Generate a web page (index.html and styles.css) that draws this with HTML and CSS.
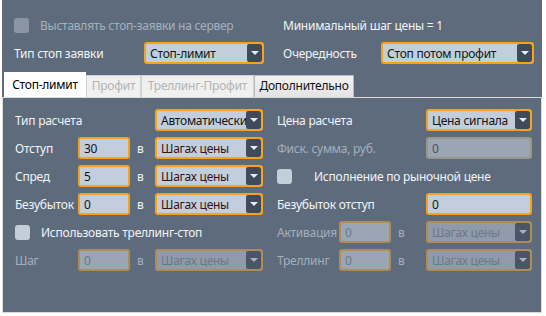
FILE: index.html
```html
<!DOCTYPE html>
<html lang="ru">
<head>
<meta charset="UTF-8">
<title>Стоп-заявки</title>
<link rel="stylesheet" href="styles.css">
</head>
<body>
<div class="window">

  <div class="top">
    <div class="top-row first">
      <label class="check-item disabled wide">
        <span class="box"></span>
        <span>Выставлять стоп-заявки на сервер</span>
      </label>
      <span class="lbl">Минимальный шаг цены = 1</span>
    </div>
    <div class="top-row second">
      <span class="lbl type-lbl">Тип стоп заявки</span>
      <div class="combo type-combo"><span class="val">Стоп-лимит</span><span class="arrow"></span></div>
      <span class="lbl order-lbl">Очередность</span>
      <div class="combo order-combo"><span class="val">Стоп потом профит</span><span class="arrow"></span></div>
    </div>
  </div>

  <div class="tabs">
    <div class="tab active t1">Стоп-лимит</div>
    <div class="tab off t2">Профит</div>
    <div class="tab off t3">Треллинг-Профит</div>
    <div class="tab extra t4">Дополнительно</div>
  </div>

  <div class="panel">
    <!-- левая колонка -->
    <div class="form left">
      <span class="lbl span2">Тип расчета</span>
      <span></span>
      <div class="combo"><span class="val">Автоматически</span><span class="arrow"></span></div>

      <span class="lbl">Отступ</span>
      <div class="input">30</div>
      <span class="lbl in">в</span>
      <div class="combo"><span class="val brown">Шагах цены</span><span class="arrow"></span></div>

      <span class="lbl">Спред</span>
      <div class="input">5</div>
      <span class="lbl in">в</span>
      <div class="combo"><span class="val brown">Шагах цены</span><span class="arrow"></span></div>

      <span class="lbl">Безубыток</span>
      <div class="input">0</div>
      <span class="lbl in">в</span>
      <div class="combo"><span class="val brown">Шагах цены</span><span class="arrow"></span></div>

      <label class="check-item span4">
        <span class="box"></span>
        <span>Использовать треллинг-стоп</span>
      </label>

      <span class="lbl dim">Шаг</span>
      <div class="input disabled">0</div>
      <span class="lbl in dim">в</span>
      <div class="combo disabled"><span class="val">Шагах цены</span><span class="arrow"></span></div>
    </div>

    <!-- правая колонка -->
    <div class="form right">
      <span class="lbl span3">Цена расчета</span>
      <div class="combo"><span class="val">Цена сигнала</span><span class="arrow"></span></div>

      <span class="lbl dim span3">Фиск. сумма, руб.</span>
      <div class="input grey">0</div>

      <label class="check-item span4 market">
        <span class="box"></span>
        <span class="market-text">Исполнение по рыночной цене</span>
      </label>

      <span class="lbl span3">Безубыток отступ</span>
      <div class="input">0</div>

      <span class="lbl dim">Активация</span>
      <div class="input disabled">0</div>
      <span class="lbl in dim">в</span>
      <div class="combo disabled"><span class="val">Шагах цены</span><span class="arrow"></span></div>

      <span class="lbl dim">Треллинг</span>
      <div class="input disabled">0</div>
      <span class="lbl in dim">в</span>
      <div class="combo disabled"><span class="val">Шагах цены</span><span class="arrow"></span></div>
    </div>
  </div>

</div>
</body>
</html>
```

FILE: styles.css
```css
body {
    margin: 0;
    background: #ffffff;
    font-family: "Noto Sans", "Open Sans", sans-serif;
    font-size: 12px;
    letter-spacing: -0.25px;
    color: #f2f4f6;
}

.window {
    margin-left: 2px;
    width: 540px;
    height: 313px;
    background: #5d6b7c;
    display: flex;
    flex-direction: column;
}

/* верхняя часть */
.top {
    padding: 15px 0 0 12px;
}
.top-row {
    display: flex;
    align-items: center;
}
.top-row.first {
    height: 20px;
}
.top-row.second {
    margin-top: 7px;
    height: 22px;
}
.wide {
    width: 269px;
}
.type-lbl {
    width: 130px;
}
.type-combo {
    width: 120px;
}
.order-lbl {
    margin-left: 19px;
    width: 98px;
}
.order-combo {
    width: 153px;
}

.lbl {
    white-space: nowrap;
}
.lbl.dim {
    color: #a4afbc;
}
.lbl.in {
    padding-left: 7px;
}

/* чекбоксы */
.check-item {
    display: flex;
    align-items: center;
    gap: 11px;
}
.box {
    width: 15px;
    height: 15px;
    border-radius: 3px;
    background: #c3cedb;
}
.check-item.disabled {
    color: #a7b1bd;
}
.check-item.disabled .box {
    background: #8a96a5;
}
.market .market-text {
    padding-left: 11px;
}

/* комбобоксы и поля */
.combo,
.input {
    box-sizing: border-box;
    height: 22px;
    border: 2px solid #f7a21b;
    border-radius: 3px;
    background: #c2cedb;
    color: #141414;
    display: flex;
    align-items: center;
    overflow: hidden;
}
.combo .val {
    flex: 1;
    padding-left: 4px;
    white-space: nowrap;
    overflow: hidden;
}
.combo .val.brown {
    color: #3a1414;
}
.combo .arrow {
    flex: none;
    width: 15px;
    height: 18px;
    background: #3f4b5d;
    border-radius: 2px;
    position: relative;
}
.combo .arrow::after {
    content: "";
    position: absolute;
    left: 4px;
    top: 7px;
    border-left: 4px solid transparent;
    border-right: 4px solid transparent;
    border-top: 4px solid #e8ecf0;
}
.input {
    padding-left: 4px;
}
.combo.disabled,
.input.disabled {
    border-color: #b08c55;
    background: #8f9baa;
    color: #6c7888;
}
.input.disabled {
    background: #9aa6b4;
}
.combo.disabled .arrow {
    background: #4a5668;
}
.combo.disabled .arrow::after {
    border-top-color: #a8b2be;
}
.input.grey {
    border-color: #98978c;
    background: #9aa6b3;
    color: #4a5260;
}

/* вкладки */
.tabs {
    margin-top: 8px;
    display: flex;
    align-items: flex-end;
    padding-left: 2px;
    height: 25px;
}
.tab {
    box-sizing: border-box;
    height: 22px;
    line-height: 20px;
    text-align: center;
    border: 1px solid #cfd2d6;
    border-bottom: none;
    background: #f0f0f0;
    color: #b3b3b3;
    white-space: nowrap;
}
.t1 { width: 82px; }
.t2 { width: 55px; }
.t3 { width: 113px; }
.t4 { width: 100px; }
.tab.active {
    height: 25px;
    background: #ffffff;
    color: #000000;
    line-height: 24px;
    border-color: #ffffff;
}
.tab.extra {
    background: linear-gradient(#f3f3f3, #e3e3e3);
    color: #111111;
    border-color: #b8b8b8;
}

/* панель вкладки */
.panel {
    flex: 1;
    border: 1px solid #d8dbdf;
    display: flex;
    padding: 11px 0 0 12px;
}
.form {
    display: grid;
    grid-auto-rows: 22px;
    row-gap: 6px;
    align-items: center;
}
.form.left {
    grid-template-columns: 63px 52px 25px 108px;
}
.form.right {
    margin-left: 14px;
    grid-template-columns: 62px 52px 35px 106px;
}
.span2 {
    grid-column: span 2;
}
.span3 {
    grid-column: span 3;
}
.span4 {
    grid-column: span 4;
}
```
